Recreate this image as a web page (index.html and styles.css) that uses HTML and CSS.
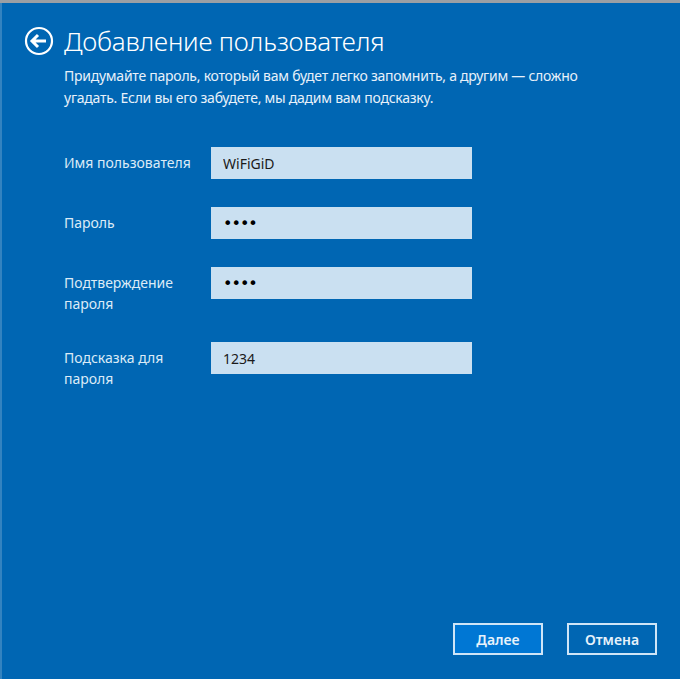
FILE: index.html
```html
<!DOCTYPE html>
<html lang="ru">

<head>
    <meta charset="UTF-8">
    <meta name="viewport" content="width=device-width, initial-scale=1.0">
    <title>Добавление пользователя</title>
    <link rel="stylesheet" href="styles.css">
</head>

<body>

    <div class="window">
        <div class="header">
            <button class="back" aria-label="Назад">
                <svg width="30" height="30" viewBox="0 0 30 30">
                    <circle cx="15" cy="15" r="13" fill="none" stroke="#fff" stroke-width="2.2"/>
                    <path d="M8 15 H22 M14 9 L8 15 L14 21" fill="none" stroke="#fff" stroke-width="3" stroke-linejoin="miter" stroke-linecap="butt"/>
                </svg>
            </button>
            <h1>Добавление пользователя</h1>
        </div>

        <p class="intro">Придумайте пароль, который вам будет легко запомнить, а другим — сложно угадать. Если вы его забудете, мы дадим вам подсказку.</p>

        <form class="user-form">
            <label for="login">Имя пользователя</label>
            <input type="text" id="login" value="WiFiGiD">

            <label for="pass">Пароль</label>
            <input type="password" id="pass" value="1234">

            <label for="pass2">Подтверждение пароля</label>
            <input type="password" id="pass2" value="1234">

            <label for="hint">Подсказка для пароля</label>
            <input type="text" id="hint" value="1234">
        </form>

        <div class="actions">
            <button class="btn primary">Далее</button>
            <button class="btn">Отмена</button>
        </div>
    </div>

</body>

</html>
```

FILE: styles.css
```css
body {
    margin: 0;
    font-family: 'Noto Sans', 'Open Sans', sans-serif;
    background-color: #9b9fa4;
}

.window {
    height: 676px;
    margin-top: 3px;
    background-color: #0066b3;
    border-left: 2px solid #3383c0;
    display: flex;
    flex-direction: column;
    color: #fff;
}

.header {
    display: flex;
    align-items: center;
    padding: 23px 0 0 22px;
    height: 30px;
}

.back {
    background: none;
    border: none;
    padding: 0;
    width: 30px;
    height: 30px;
    display: flex;
}

.header h1 {
    margin: 0 0 0 10px;
    font-size: 26px;
    font-weight: 300;
    line-height: 30px;
    letter-spacing: -0.2px;
}

.intro {
    margin: 9px 60px 0 62px;
    font-size: 14px;
    line-height: 22px;
    letter-spacing: -0.25px;
    color: #e8f1fa;
}

.user-form {
    display: grid;
    grid-template-columns: 147px 261px;
    row-gap: 28px;
    align-items: start;
    margin: 38px 0 0 62px;
}

.user-form label {
    padding-top: 5px;
    padding-right: 10px;
    font-size: 14px;
    line-height: 21px;
    color: #dcebf7;
}

.user-form input {
    height: 32px;
    box-sizing: border-box;
    border: none;
    background-color: #cae0f1;
    padding: 0 12px;
    font-family: 'Noto Sans', sans-serif;
    font-size: 14px;
    color: #1a1a1a;
    outline: none;
}

.user-form input[type="password"] {
    font-family: 'DejaVu Sans', sans-serif;
    font-size: 16px;
    letter-spacing: -1px;
    color: #000;
}

.actions {
    margin-top: auto;
    display: flex;
    justify-content: flex-end;
    gap: 24px;
    padding: 0 23px 24px 0;
}

.btn {
    width: 90px;
    height: 32px;
    border: 2px solid #cfe5f7;
    background-color: #0066b3;
    color: #e6f2fb;
    font-family: 'Noto Sans', sans-serif;
    font-size: 14px;
    font-weight: 600;
}

.btn.primary {
    background-color: #0077d4;
}
```
